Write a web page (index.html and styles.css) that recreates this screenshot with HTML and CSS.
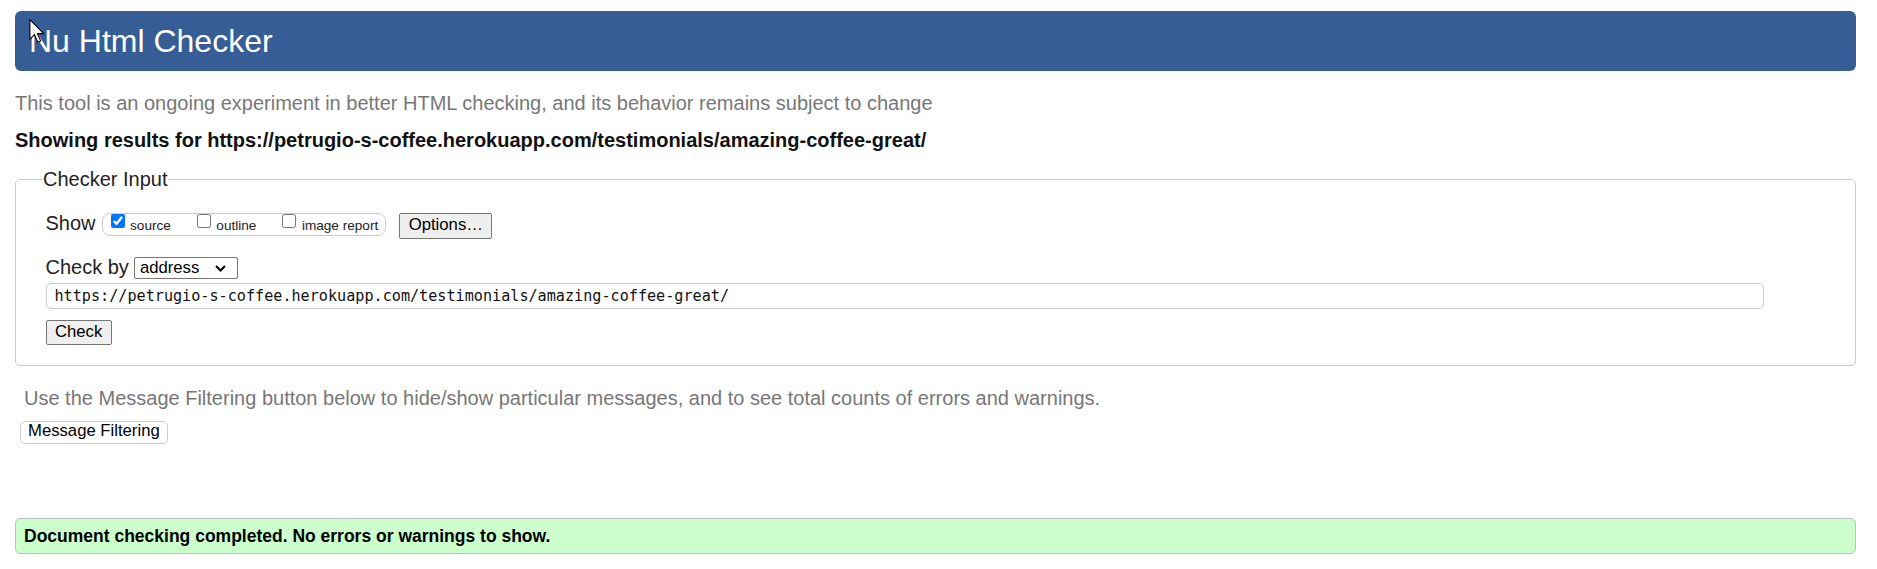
FILE: index.html
```html
<!DOCTYPE html>
<html lang="en">
<head>
<meta charset="utf-8">
<title>Showing results for https://petrugio-s-coffee.herokuapp.com/testimonials/amazing-coffee-great/ - Nu Html Checker</title>
<link rel="stylesheet" href="styles.css">
</head>
<body>
<div class="page">
  <h1 class="banner">Nu Html Checker<svg class="cursor" width="16" height="24" viewBox="0 0 13 20" aria-hidden="true"><path d="M0.6 0.6 V16.8 L4.4 13.1 L7.2 19.3 L9.6 18.3 L6.9 12.2 H12.1 Z" fill="#fff" stroke="#000" stroke-width="0.9" stroke-linejoin="miter"/></svg></h1>
  <p class="intro">This tool is an ongoing experiment in better HTML checking, and its behavior remains subject to change</p>
  <p class="results">Showing results for https://petrugio-s-coffee.herokuapp.com/testimonials/amazing-coffee-great/</p>
  <form class="form">
    <fieldset class="checker">
      <legend class="legend">Checker Input</legend>
      <div class="row show-row">
        <span class="label">Show</span>
        <span class="opts">
          <label class="opt"><input class="cb" type="checkbox" checked>source</label>
          <label class="opt"><input class="cb" type="checkbox">outline</label>
          <label class="opt"><input class="cb" type="checkbox">image report</label>
        </span>
        <button class="btn options-btn" type="button">Options…</button>
      </div>
      <div class="row by-row">
        <span class="label">Check by</span>
        <span class="select-wrap">
          <select class="select"><option>address</option></select>
          <svg class="chev" width="11" height="7" viewBox="0 0 11 7" aria-hidden="true"><path d="M1 1 L5.5 5.5 L10 1" fill="none" stroke="#000" stroke-width="2"/></svg>
        </span>
      </div>
      <input class="url" type="url" value="https://petrugio-s-coffee.herokuapp.com/testimonials/amazing-coffee-great/">
      <button class="btn check-btn" type="button">Check</button>
    </fieldset>
  </form>
  <p class="filter-note">Use the Message Filtering button below to hide/show particular messages, and to see total counts of errors and warnings.</p>
  <button class="filter-btn" type="button">Message Filtering</button>
  <div class="success">Document checking completed. No errors or warnings to show.</div>
</div>
</body>
</html>
```

FILE: styles.css
```css
* {
  box-sizing: border-box;
}

html, body {
  margin: 0;
  background: #fff;
}

body {
  font-family: "Liberation Sans", Arial, sans-serif;
  font-size: 20px;
  line-height: 23px;
  color: #222;
}

.page {
  padding: 11px 21px 0 15px;
}

.banner {
  position: relative;
  margin: 0;
  height: 60px;
  line-height: 60px;
  padding: 0 14px;
  background: #365d95;
  color: #fff;
  font-size: 32px;
  font-weight: normal;
  border-radius: 6px;
}

.cursor {
  position: absolute;
  left: 14px;
  top: 8px;
}

.intro {
  margin: 21px 0 0;
  color: #777;
}

.results {
  margin: 14px 0 0;
  font-weight: bold;
  color: #111;
}

.form {
  margin: 16px 0 0;
}

.checker {
  margin: 0;
  padding: 21px 20px 20px 29.5px;
  border: 1px solid #ccc;
  border-radius: 5px;
  min-width: 0;
}

.legend {
  padding: 0;
  margin-left: -2.5px;
  color: #222;
  line-height: 23px;
}

.row {
  display: flex;
}

.show-row {
  align-items: baseline;
}

.by-row {
  align-items: center;
  margin-top: 17px;
}

.label {
  color: #222;
  line-height: 23px;
}

.show-row .label {
  margin-right: 6px;
}

.by-row .label {
  margin-right: 5px;
}

.opts {
  display: inline-flex;
  align-items: baseline;
  gap: 26px;
  height: 23px;
  padding: 0 6.5px 0 8px;
  border: 1px solid #ccc;
  border-radius: 8px;
  margin-right: 13.5px;
}

.opt {
  font-size: 13.6px;
  line-height: 20px;
  color: #222;
  white-space: nowrap;
}

.cb {
  width: 14px;
  height: 14px;
  margin: 0 5.5px 0 0;
  vertical-align: 2px;
  accent-color: #0075ff;
}

.btn {
  display: block;
  font-family: "Liberation Sans", Arial, sans-serif;
  font-size: 16.7px;
  color: #000;
  background: #efefef;
  border: 1px solid #767676;
  border-radius: 2px;
  padding: 0 8.5px 3px;
  height: 26px;
  line-height: 21px;
}

.check-btn {
  margin-top: 11px;
  height: 25px;
  padding-bottom: 2px;
}

.select-wrap {
  position: relative;
  display: inline-block;
  height: 22px;
}

.select {
  -webkit-appearance: none;
  appearance: none;
  display: block;
  width: 104px;
  height: 22px;
  margin: 0;
  padding: 0 20px 0 5px;
  font-family: "Liberation Sans", Arial, sans-serif;
  font-size: 16.7px;
  line-height: 20px;
  color: #000;
  background: #fff;
  border: 1px solid #767676;
  border-radius: 2px;
}

.chev {
  position: absolute;
  right: 12px;
  top: 8px;
  pointer-events: none;
}

.url {
  display: block;
  width: 1718px;
  height: 26px;
  margin-top: 4px;
  padding: 0 8px;
  font-family: "DejaVu Sans Mono", "Liberation Mono", monospace;
  font-size: 15.15px;
  color: #111;
  background: #fff;
  border: 1px solid #ccc;
  border-radius: 5px;
}

.filter-note {
  margin: 21px 0 0;
  padding-left: 9px;
  color: #777;
}

.filter-btn {
  display: block;
  margin: 11px 0 0 5px;
  height: 23px;
  padding: 0 7px 2.5px;
  font-family: "Liberation Sans", Arial, sans-serif;
  font-size: 16.7px;
  line-height: 18.5px;
  color: #000;
  background: #fff;
  border: 1px solid #ccc;
  border-radius: 5px;
}

.success {
  margin-top: 74px;
  height: 36px;
  padding: 0 8px;
  line-height: 34px;
  font-size: 17.5px;
  font-weight: bold;
  color: #000;
  background: #ccffcc;
  border: 1px solid #c0c0c0;
  border-radius: 5px;
}
```
